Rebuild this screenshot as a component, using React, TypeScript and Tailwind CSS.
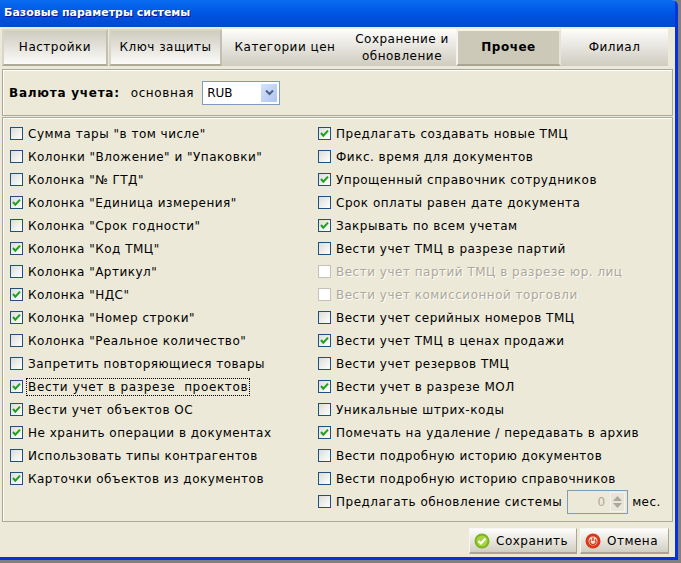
import React from "react";

const left: [string, boolean][] = [
  ['Сумма тары "в том числе"', false],
  ['Колонки "Вложение" и "Упаковки"', false],
  ['Колонка "№ ГТД"', false],
  ['Колонка "Единица измерения"', true],
  ['Колонка "Срок годности"', false],
  ['Колонка "Код ТМЦ"', true],
  ['Колонка "Артикул"', false],
  ['Колонка "НДС"', true],
  ['Колонка "Номер строки"', true],
  ['Колонка "Реальное количество"', false],
  ["Запретить повторяющиеся товары", false],
  ["Вести учет в разрезе  проектов", true],
  ["Вести учет объектов ОС", true],
  ["Не хранить операции в документах", true],
  ["Использовать типы контрагентов", false],
  ["Карточки объектов из документов", true],
];

const right: [string, boolean, boolean?][] = [
  ["Предлагать создавать новые ТМЦ", true],
  ["Фикс. время для документов", false],
  ["Упрощенный справочник сотрудников", true],
  ["Срок оплаты равен дате документа", false],
  ["Закрывать по всем учетам", true],
  ["Вести учет ТМЦ в разрезе партий", false],
  ["Вести учет партий ТМЦ в разрезе юр. лиц", false, true],
  ["Вести учет комиссионной торговли", false, true],
  ["Вести учет серийных номеров ТМЦ", false],
  ["Вести учет ТМЦ в ценах продажи", true],
  ["Вести учет резервов ТМЦ", false],
  ["Вести учет в разрезе МОЛ", true],
  ["Уникальные штрих-коды", false],
  ["Помечать на удаление / передавать в архив", true],
  ["Вести подробную историю документов", false],
  ["Вести подробную историю справочников", false],
];

function Box({ checked, disabled }: { checked: boolean; disabled?: boolean }) {
  return (
    <span
      className={
        disabled
          ? "w-[13px] h-[13px] shrink-0 border border-[#c4c2b8] bg-white"
          : "w-[13px] h-[13px] shrink-0 border border-[#1c5180] bg-gradient-to-br from-[#dcdcd7] to-white flex items-center justify-center"
      }
    >
      {checked && (
        <svg width="11" height="11" viewBox="0 0 11 11">
          <path d="M2 5 L4.3 7.6 L9 2.6" fill="none" stroke="#21a121" strokeWidth="2.1" />
        </svg>
      )}
    </span>
  );
}

function Row({ label, checked, disabled, focus }: { label: string; checked: boolean; disabled?: boolean; focus?: boolean }) {
  return (
    <div className="h-[23px] flex items-center">
      <Box checked={checked} disabled={disabled} />
      <span
        className={
          "ml-[3px] px-[1px] h-[18px] leading-[16px] whitespace-pre border " +
          (focus ? "tracking-[0.65px] border-dotted border-black" : "tracking-[0.5px] border-transparent") +
          (disabled ? " text-[#aca899] [text-shadow:1px_1px_0_#fff]" : " text-black")
        }
      >
        {label}
      </span>
    </div>
  );
}

function Tab({ children, w, kind }: { children: React.ReactNode; w: string; kind: "raised" | "flat" | "shifted" | "active" }) {
  const cls =
    kind === "raised"
      ? "bg-gradient-to-b from-[#cfccbf] to-[#fbfbf9] border-2 border-t-[#d8d6ca] border-l-[#d8d6ca] border-r-[#c2bfb0] border-b-[#aeaa99]"
      : kind === "active"
        ? "bg-[#ccc9b9] font-bold border-2 border-t-[#f4f3ee] border-l-[#f4f3ee] border-r-[#e6e4da] border-b-[#a8a595] text-[12px] tracking-[0.5px]"
        : kind === "shifted"
          ? "bg-gradient-to-b from-[#fdfdfc] to-[#cfccbf] pl-[10px]"
          : "bg-gradient-to-b from-[#fdfdfc] to-[#cfccbf]";
  return (
    <div className={`${w} h-[37px] shrink-0 flex items-center justify-center text-center leading-[17px] tracking-[0.5px] ${cls}`}>
      {children}
    </div>
  );
}

function Btn({ w, icon, label }: { w: string; icon: React.ReactNode; label: string }) {
  return (
    <div className={`${w} h-[26px] flex items-center pl-[4px] gap-[6px] text-[12px] tracking-[0.5px] bg-gradient-to-b from-[#fdfdfc] to-[#d2cfc2] border border-[#f7f6f1] border-b-[#a8a595] border-r-[#a8a595] border-b-2`}>
      {icon}
      <span>{label}</span>
    </div>
  );
}

export default function App() {
  return (
    <div className="w-[681px] h-[563px] bg-[#808080] overflow-hidden [font-family:'DejaVu_Sans',sans-serif] text-[12px] text-black">
      <div className="w-[678px] h-[560px] bg-[#0831d9] pr-[3px] pb-[3px] rounded-tr-[6px] overflow-hidden">
        <div className="h-full flex flex-col bg-[#ece9d8]">
          <div className="h-[27px] shrink-0 flex items-center pl-[4px] text-white font-bold text-[11px] [text-shadow:1px_1px_0_#0f1089] bg-gradient-to-b from-[#0a6cf0] via-[#0054e3] to-[#0049d0]">
            Базовые параметры системы
          </div>
          <div className="flex pl-[2px] pt-[2px]">
            <Tab w="w-[106px]" kind="raised">Настройки</Tab>
            <Tab w="w-[113px] ml-px" kind="raised">Ключ защиты</Tab>
            <Tab w="w-[116px]" kind="shifted">Категории цен</Tab>
            <Tab w="w-[118px]" kind="shifted">Сохранение и<br />обновление</Tab>
            <Tab w="w-[105px]" kind="active">Прочее</Tab>
            <Tab w="w-[107px]" kind="flat">Филиал</Tab>
          </div>
          <div className="mx-[2px] mt-[3px] h-[47px] border border-[#aca899] shadow-[inset_1px_1px_0_#fff] flex items-center pl-[6px]">
            <span className="font-bold text-[12px] tracking-[0.75px]">Валюта учета:</span>
            <span className="ml-[11px] tracking-[0.6px]">основная</span>
            <div className="ml-[8px] w-[78px] h-[24px] border border-[#7f9db9] bg-white flex items-center justify-between pl-[4px] pr-[2px]">
              <span className="text-[12px]">RUB</span>
              <span className="w-[16px] h-[18px] bg-gradient-to-br from-[#d6e2fb] to-[#b0c4f0] flex items-center justify-center">
                <svg width="9" height="7" viewBox="0 0 9 7">
                  <path d="M1 1.5 L4.5 5 L8 1.5" fill="none" stroke="#4d6185" strokeWidth="2" />
                </svg>
              </span>
            </div>
          </div>
          <div className="mx-[2px] mt-px h-[405px] border border-[#aca899] shadow-[inset_1px_1px_0_#fff] flex pt-[4px] pl-[7px]">
            <div className="w-[308px]">
              {left.map(([l, c]) => (
                <Row key={l} label={l} checked={c} focus={l.includes("проектов")} />
              ))}
            </div>
            <div>
              {right.map(([l, c, d]) => (
                <Row key={l} label={l} checked={c} disabled={d} />
              ))}
              <div className="h-[23px] flex items-center">
                <Box checked={false} />
                <span className="ml-[3px] px-[2px] tracking-[0.5px] whitespace-nowrap">Предлагать обновление системы</span>
                <div className="ml-[3px] w-[61px] h-[24px] shrink-0 border border-[#7f9db9] bg-[#ece9d8] flex items-center justify-end pr-[2px] gap-[5px]">
                  <span className="text-[#aca899]">0</span>
                  <span className="w-[15px] h-[20px] bg-[#e8e6da] border border-[#f4f3ee] flex flex-col items-center justify-center gap-[2px]">
                    <svg width="9" height="5" viewBox="0 0 9 5"><path d="M4.5 0 L9 5 H0 Z" fill="#aca899" /></svg>
                    <svg width="9" height="5" viewBox="0 0 9 5"><path d="M4.5 5 L9 0 H0 Z" fill="#aca899" /></svg>
                  </span>
                </div>
                <span className="ml-[4px] tracking-[0.4px]">мес.</span>
              </div>
            </div>
          </div>
          <div className="flex justify-end gap-[3px] pr-[6px] pt-[6px]">
            <Btn
              w="w-[108px]"
              label="Сохранить"
              icon={
                <svg width="16" height="16" viewBox="0 0 16 16">
                  <circle cx="8" cy="8" r="7.5" fill="#7fb21c" />
                  <circle cx="8" cy="8" r="5.5" fill="#a6d443" />
                  <path d="M4.5 8 L7 10.5 L11.5 5.5" fill="none" stroke="#fff" strokeWidth="2.2" />
                </svg>
              }
            />
            <Btn
              w="w-[89px]"
              label="Отмена"
              icon={
                <svg width="16" height="16" viewBox="0 0 16 16">
                  <circle cx="8" cy="8" r="7.5" fill="#d8391a" />
                  <circle cx="8" cy="8" r="4.5" fill="#f5dcd0" />
                  <path d="M5.9 6.5 A3 3 0 1 0 10.1 6.5" fill="none" stroke="#d8391a" strokeWidth="1.3" />
                  <path d="M8 4.5 V8" stroke="#d8391a" strokeWidth="1.4" />
                </svg>
              }
            />
          </div>
        </div>
      </div>
    </div>
  );
}
